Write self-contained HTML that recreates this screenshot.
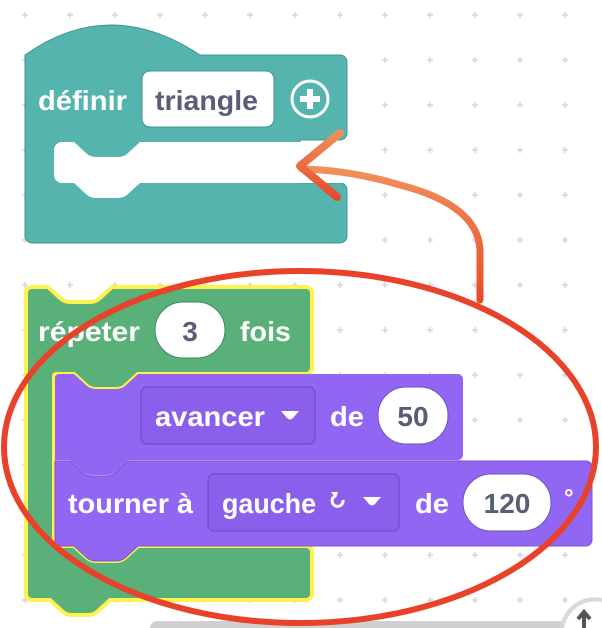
<!DOCTYPE html>
<html><head><meta charset="utf-8"><style>
html,body{margin:0;padding:0;background:#fff;width:602px;height:628px;overflow:hidden}
svg{display:block}
text{font-family:"Liberation Sans",sans-serif;font-weight:bold}
</style></head><body>
<svg width="602" height="628" viewBox="0 0 602 628" xmlns="http://www.w3.org/2000/svg">
<defs>
<pattern id="dots" x="25" y="15" width="45" height="45" patternUnits="userSpaceOnUse">
<path d="M0 -3v6M-3 0h6M45 -3v6M42 0h6M0 42v6M-3 45h6M45 42v6M42 45h6" stroke="#d6d6d6" stroke-width="1.5"/>
</pattern>
<linearGradient id="ag" x1="0" y1="1" x2="0" y2="0">
<stop offset="0" stop-color="#e84a2a"/><stop offset="1" stop-color="#f0905a"/>
</linearGradient>
</defs>
<rect width="602" height="628" fill="url(#dots)"/>

<path d="M25 55 Q110 -5 200 55 H340 a7 7 0 0 1 7 7 V133 a7 7 0 0 1 -7 7 H300 V183 H340 a7 7 0 0 1 7 7 V236 a7 7 0 0 1 -7 7 H32 a7 7 0 0 1 -7 -7 Z" fill="#55b5ae" stroke="#3f968f" stroke-width="1"/>
<path d="M62 142 H74 L86 153 Q90 157 96 157 H118 Q124 157 128 153 L140 142 H347 V183 H140 L128 194 Q124 198 118 198 H96 Q90 198 86 194 L74 183 H62 a8 8 0 0 1 -8 -8 V150 a8 8 0 0 1 8 -8Z" fill="#fff"/>
<text x="38" y="110" fill="#fff" font-size="28" textLength="89" lengthAdjust="spacingAndGlyphs">définir</text>
<rect x="142" y="71" width="132" height="56" rx="8" fill="#fff" stroke="#3f968f"/>
<text x="155" y="110" fill="#575e75" font-size="28" textLength="103" lengthAdjust="spacingAndGlyphs">triangle</text>
<circle cx="310" cy="99" r="18" fill="none" stroke="#fff" stroke-width="3"/>
<path d="M310 89v20M300 99h20" stroke="#fff" stroke-width="6"/>

<path d="M32 287 H48 L60 298 Q64 302 70 302 H90 Q96 302 100 298 L112 287 H306 a6 6 0 0 1 6 6 V368 a6 6 0 0 1 -6 6 H138 L126 385 Q122 389 116 389 H96 Q90 389 86 385 L74 374 H56 a2 2 0 0 0 -2 2 V544 a2 2 0 0 0 2 2 H74 L86 557 Q90 561 96 561 H116 Q122 561 126 557 L138 546 H306 a6 6 0 0 1 6 6 V594 a6 6 0 0 1 -6 6 H110 L98 611 Q94 615 88 615 H72 Q66 615 62 611 L50 600 H32 a6 6 0 0 1 -6 -6 V293 a6 6 0 0 1 6 -6Z" fill="#59b079" stroke="#fff14f" stroke-width="4"/>
<text x="38" y="341" fill="#fff" font-size="28" textLength="102" lengthAdjust="spacingAndGlyphs">répeter</text>
<rect x="155" y="302" width="70" height="56" rx="28" fill="#fff" stroke="#3d8a5c"/>
<text x="190" y="341" fill="#575e75" font-size="28" text-anchor="middle">3</text>
<text x="240" y="341" fill="#fff" font-size="28" textLength="51" lengthAdjust="spacingAndGlyphs">fois</text>

<path d="M55 461 H70 L82 472 Q86 476 92 476 H106 Q112 476 116 472 L128 461 H586 a6 6 0 0 1 6 6 V540 a6 6 0 0 1 -6 6 H138 L126 557 Q122 561 116 561 H96 Q90 561 86 557 L74 546 H55Z" fill="#9166f3" stroke="#7a55d6"/>
<path d="M59 374 H74 L86 385 Q90 389 96 389 H116 Q122 389 126 385 L138 374 H458 a5 5 0 0 1 5 5 V455 a5 5 0 0 1 -5 5 H128 L116 471 Q112 475 106 475 H92 Q86 475 82 471 L70 460 H55 V378 a4 4 0 0 1 4 -4Z" fill="#9166f3"/>
<path d="M55 461 H70 L82 472 Q86 476 92 476 H106 Q112 476 116 472 L128 461 H463" fill="none" stroke="#7a55d6" stroke-width="1.2"/>
<rect x="141" y="387" width="174" height="57" rx="6" fill="#8a5fec" stroke="#6d4fc2" stroke-width="1.2"/>
<text x="155" y="426" fill="#fff" font-size="28" textLength="110" lengthAdjust="spacingAndGlyphs">avancer</text>
<path d="M281 411 h18 l-6 7 q-3 3 -6 0z" fill="#fff"/>
<text x="330" y="426" fill="#fff" font-size="28" textLength="34" lengthAdjust="spacingAndGlyphs">de</text>
<rect x="378" y="387" width="70" height="57" rx="28" fill="#fff" stroke="#6d4fc2"/>
<text x="413" y="426" fill="#575e75" font-size="28" text-anchor="middle">50</text>

<text x="68" y="513" fill="#fff" font-size="28" textLength="125" lengthAdjust="spacingAndGlyphs">tourner à</text>
<rect x="208" y="474" width="191" height="57" rx="6" fill="#8a5fec" stroke="#6d4fc2" stroke-width="1.2"/>
<text x="222" y="513" fill="#fff" font-size="28" textLength="94" lengthAdjust="spacingAndGlyphs">gauche</text>
<path d="M343 500 A5.5 5.5 0 1 1 335 496" fill="none" stroke="#fff" stroke-width="3"/>
<path d="M331 492 l7 0 -2 6z" fill="#fff"/>
<path d="M363 497 h18 l-6 7 q-3 3 -6 0z" fill="#fff"/>
<text x="415" y="513" fill="#fff" font-size="28" textLength="34" lengthAdjust="spacingAndGlyphs">de</text>
<rect x="463" y="474" width="88" height="57" rx="28" fill="#fff" stroke="#6d4fc2"/>
<text x="507" y="513" fill="#575e75" font-size="28" text-anchor="middle">120</text>
<text x="564" y="506" fill="#fff" font-size="24">°</text>

<rect x="150" y="621" width="420" height="14" rx="7" fill="#cfcfcf"/>
<path d="M560 628 a35 35 0 0 1 42 -30 V628Z" fill="#d9d9d9"/>
<path d="M564 628 a32 32 0 0 1 38 -26 V628Z" fill="#fff"/>
<path d="M584 628 V614 M578 619 l6 -7 6 7" stroke="#555" stroke-width="4" fill="none"/>

<ellipse cx="300" cy="447" rx="296" ry="176" fill="none" stroke="#e8432a" stroke-width="6"/>
<path d="M480 300 V250 Q478 205 400 185 Q350 170 302 169" fill="none" stroke="url(#ag)" stroke-width="7" stroke-linecap="round"/>
<path d="M340 133 L300 166 L337 197" fill="none" stroke="url(#ag)" stroke-width="8" stroke-linecap="round" stroke-linejoin="round"/>
</svg>
</body></html>
